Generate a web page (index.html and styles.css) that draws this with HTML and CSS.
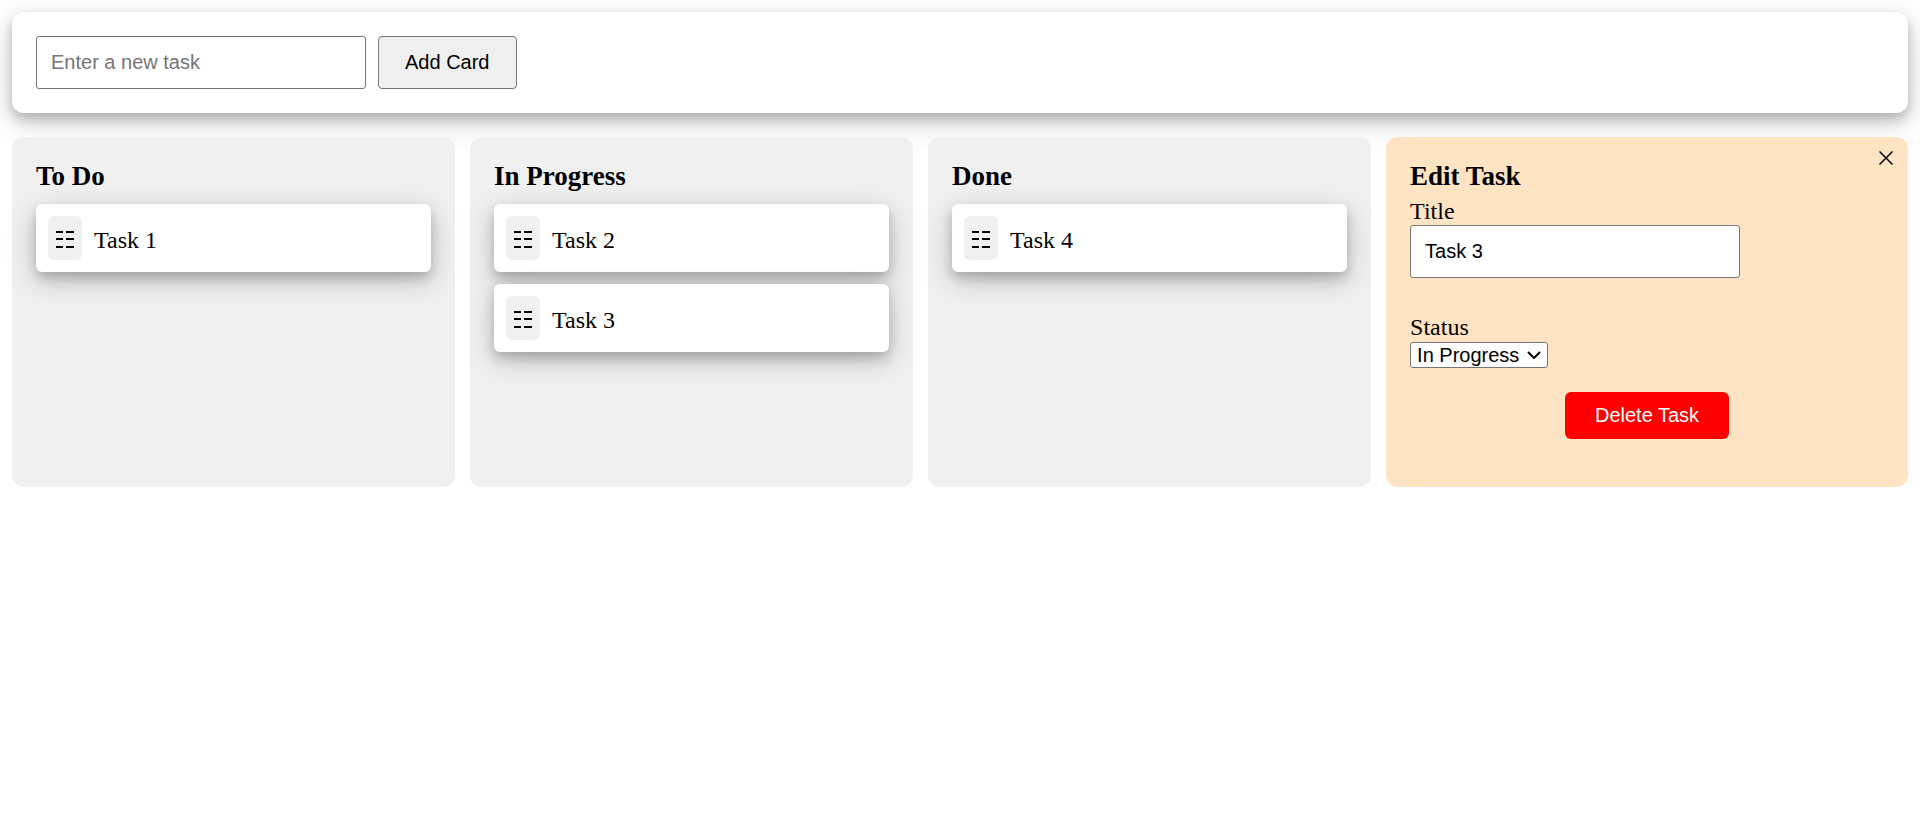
FILE: index.html
```html
<!DOCTYPE html>
<html lang="en">
<head>
<meta charset="utf-8">
<title>Task Board</title>
<link rel="stylesheet" href="styles.css">
</head>
<body>
<form class="toolbar">
  <input class="text-field" type="text" placeholder="Enter a new task" aria-label="New task">
  <button class="add-button" type="button">Add Card</button>
</form>
<main class="board">
  <section class="column">
    <h2 class="heading">To Do</h2>
    <div class="cards">
      <article class="card"><span class="handle"><svg class="grip" viewBox="0 0 18 18" aria-hidden="true"><path d="M0 0h7v2H0zM10 0h8v2h-8zM0 7h7v2H0zM10 7h8v2h-8zM0 15h7v2H0zM10 15h8v2h-8z"/></svg></span><span class="card-title">Task 1</span></article>
    </div>
  </section>
  <section class="column">
    <h2 class="heading">In Progress</h2>
    <div class="cards">
      <article class="card"><span class="handle"><svg class="grip" viewBox="0 0 18 18" aria-hidden="true"><path d="M0 0h7v2H0zM10 0h8v2h-8zM0 7h7v2H0zM10 7h8v2h-8zM0 15h7v2H0zM10 15h8v2h-8z"/></svg></span><span class="card-title">Task 2</span></article>
      <article class="card"><span class="handle"><svg class="grip" viewBox="0 0 18 18" aria-hidden="true"><path d="M0 0h7v2H0zM10 0h8v2h-8zM0 7h7v2H0zM10 7h8v2h-8zM0 15h7v2H0zM10 15h8v2h-8z"/></svg></span><span class="card-title">Task 3</span></article>
    </div>
  </section>
  <section class="column">
    <h2 class="heading">Done</h2>
    <div class="cards">
      <article class="card"><span class="handle"><svg class="grip" viewBox="0 0 18 18" aria-hidden="true"><path d="M0 0h7v2H0zM10 0h8v2h-8zM0 7h7v2H0zM10 7h8v2h-8zM0 15h7v2H0zM10 15h8v2h-8z"/></svg></span><span class="card-title">Task 4</span></article>
    </div>
  </section>
  <aside class="column editor">
    <button class="close" type="button" aria-label="Close"><svg class="close-icon" viewBox="0 0 14 14" aria-hidden="true"><path d="M0.5 0.5l13 13M13.5 0.5l-13 13"/></svg></button>
    <h2 class="heading">Edit Task</h2>
    <form class="editor-form">
      <div class="field">
        <label for="title">Title</label>
        <input class="text-field" id="title" type="text" value="Task 3">
      </div>
      <div class="field">
        <label for="status">Status</label>
        <div class="select-box">
          <select class="status" id="status">
            <option>To Do</option>
            <option selected>In Progress</option>
            <option>Done</option>
          </select>
          <svg class="chevron" viewBox="0 0 14 8" aria-hidden="true"><path d="M1 1l6 6 6-6"/></svg>
        </div>
      </div>
      <button class="delete" type="button">Delete Task</button>
    </form>
  </aside>
</main>
</body>
</html>
```

FILE: styles.css
```css
* {
  box-sizing: border-box;
}

body {
  margin: 0;
  padding: 12px;
  font: 24px "Liberation Serif", "Times New Roman", serif;
  color: #000;
  background: #fff;
}

input,
button,
select {
  font: 20px "Liberation Sans", Arial, sans-serif;
  color: #000;
}

.toolbar {
  display: flex;
  gap: 12px;
  padding: 24px;
  margin-bottom: 24px;
  border-radius: 12px;
  background: #fff;
  box-shadow: 0 6px 12px rgba(0, 0, 0, 0.2), 0 9px 30px rgba(0, 0, 0, 0.19);
}

.text-field {
  width: 330px;
  max-width: 100%;
  padding: 14px;
  border: 1px solid #767676;
  border-radius: 3px;
  background: #fff;
}

.text-field::placeholder {
  color: #757575;
}

.add-button {
  padding: 14px 26px;
  border: 1px solid #767676;
  border-radius: 4px;
  background: #efefef;
}

.board {
  display: grid;
  grid-template-columns: 1fr 1fr 1fr 1.178fr;
  gap: 15px;
}

.column {
  padding: 24px;
  border-radius: 12px;
  background: #f0f0f0;
}

.heading {
  margin: 0 0 12px;
  font-size: 27px;
  line-height: 31px;
}

.cards {
  display: grid;
  gap: 12px;
}

.card {
  display: flex;
  align-items: center;
  gap: 12px;
  padding: 12px;
  border-radius: 6px;
  background: #fff;
  box-shadow: 0 6px 12px rgba(0, 0, 0, 0.2), 0 9px 30px rgba(0, 0, 0, 0.19);
}

.card-title {
  padding-top: 4px;
}

.handle {
  display: flex;
  padding: 15px 8px 11px;
  border-radius: 6px;
  background: #f0f0f0;
  cursor: grab;
}

.grip {
  width: 18px;
  height: 18px;
}

.editor {
  position: relative;
  background: #ffe4c4;
}

.editor .heading {
  margin-bottom: 6px;
}

.editor-form {
  display: flex;
  flex-direction: column;
}

.field {
  display: flex;
  flex-direction: column;
  align-items: flex-start;
  line-height: 27px;
}

.field + .field {
  gap: 1px;
  margin-top: 36px;
}

.select-box {
  position: relative;
  display: flex;
}

.status {
  height: 26px;
  padding: 0 27px 0 6px;
  border: 1px solid #767676;
  border-radius: 3px;
  background: #fff;
  appearance: none;
}

.chevron {
  position: absolute;
  top: 9px;
  right: 7px;
  width: 14px;
  height: 8px;
  fill: none;
  stroke: #000;
  stroke-width: 2;
  pointer-events: none;
}

.delete {
  align-self: center;
  margin: 24px 0;
  padding: 12px 30px;
  border: 0;
  border-radius: 6px;
  background: #f00;
  color: #fff;
}

.close {
  position: absolute;
  top: 8px;
  right: 9px;
  display: flex;
  padding: 6px;
  border: 0;
  background: none;
}

.close-icon {
  width: 14px;
  height: 14px;
  fill: none;
  stroke: #000;
  stroke-width: 1.5;
}
```
